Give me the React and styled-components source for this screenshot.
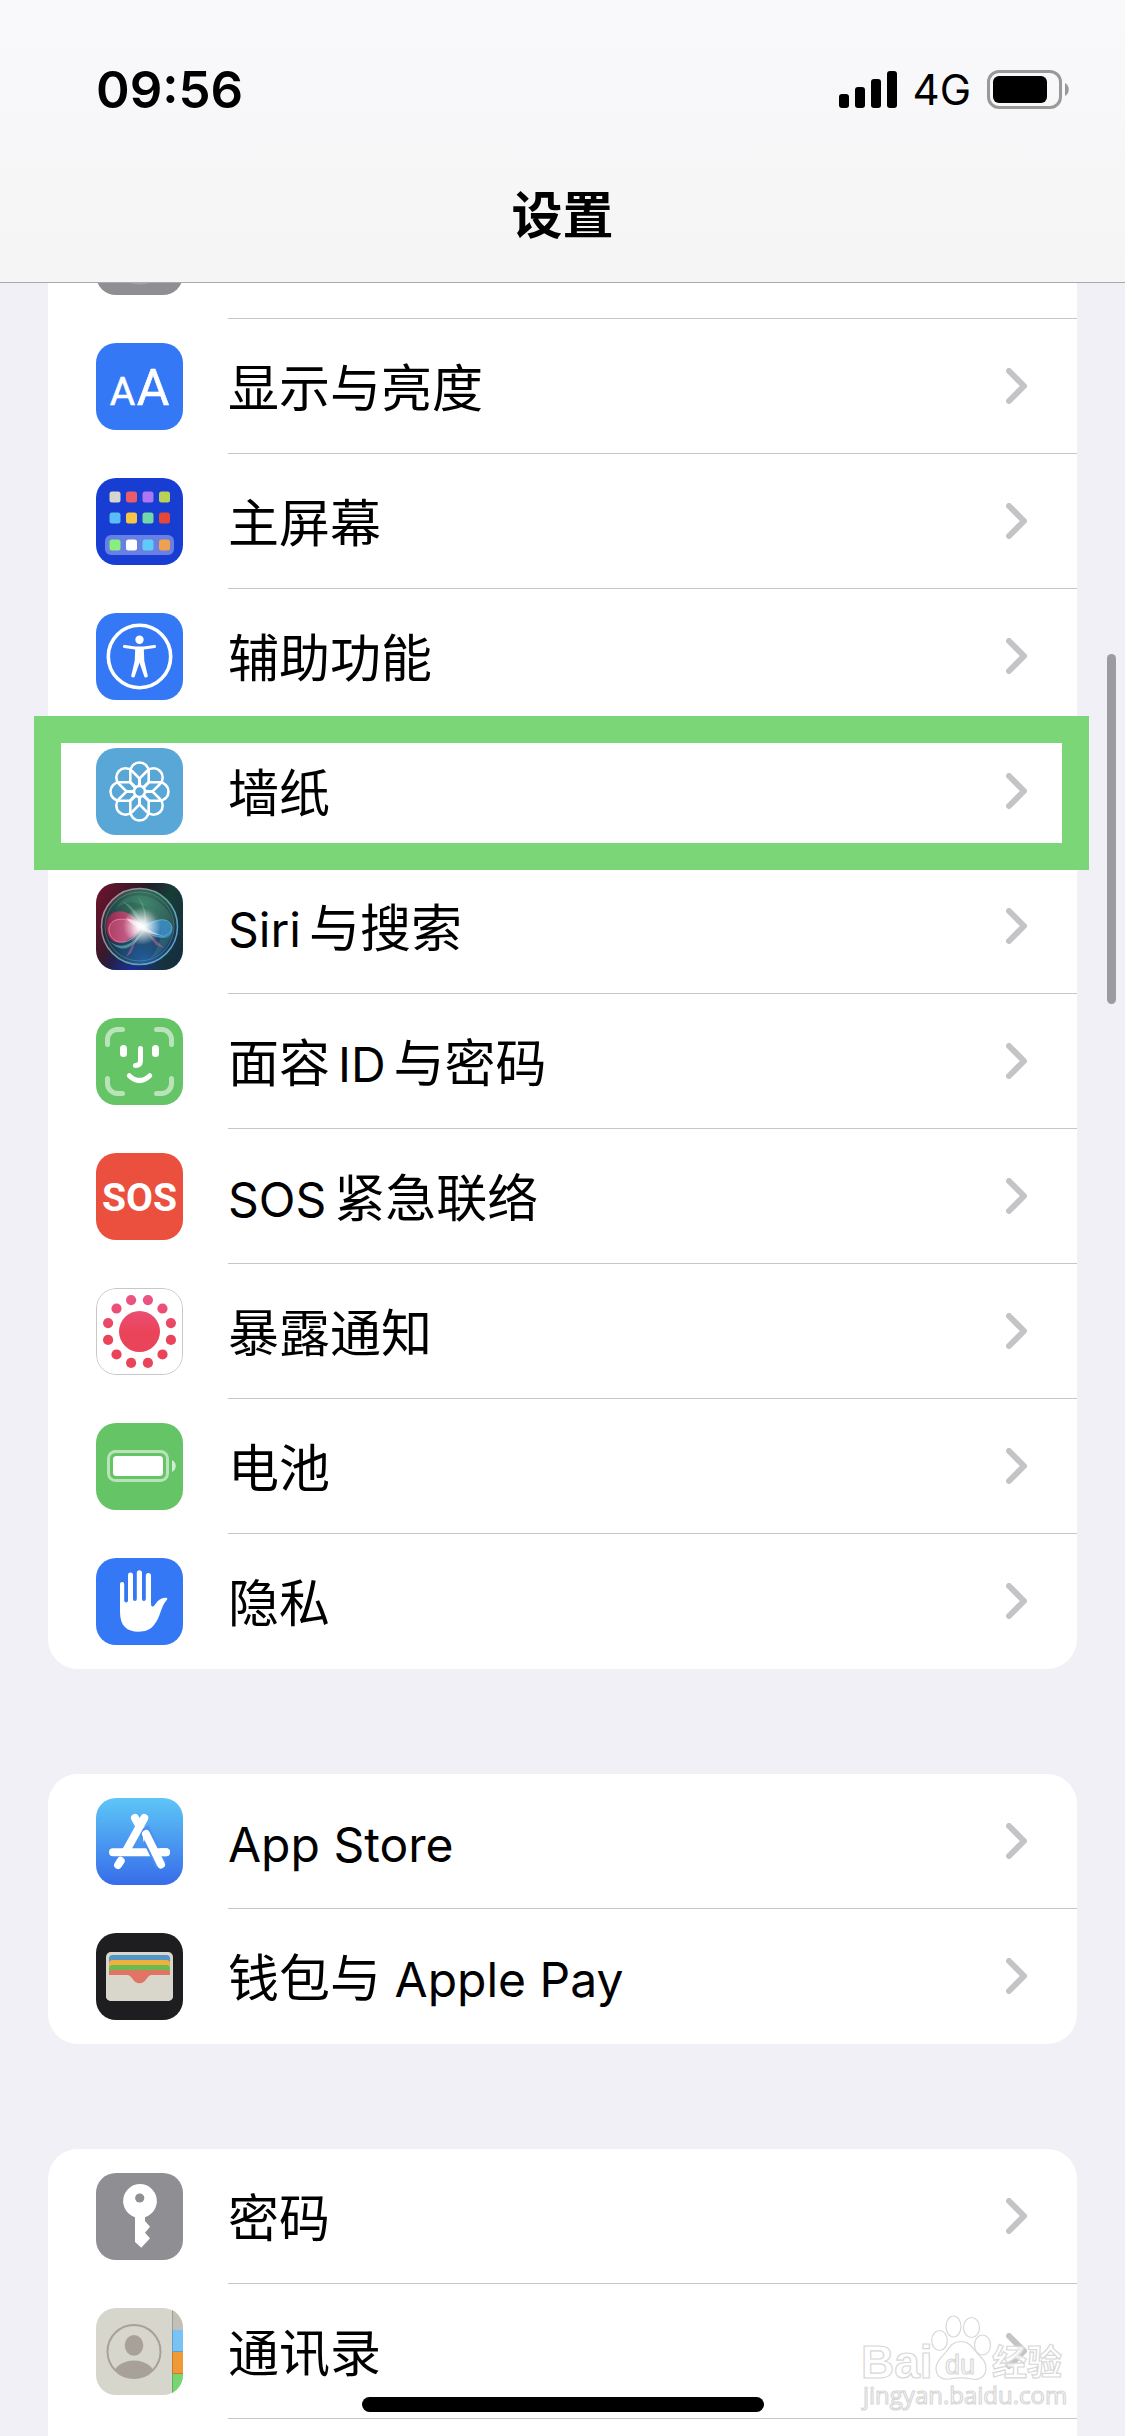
import { styled, createGlobalStyle } from 'styled-components'

const GlobalStyle = createGlobalStyle`
  * {
    box-sizing: border-box;
  }
  body {
    margin: 0;
    background-color: #f1f0f6;
    color: #000000;
    font-family: Inter, 'Noto Sans CJK SC', sans-serif;
  }
`

const StyledPage = styled.div`
  position: relative;
  height: 100vh;
  overflow: hidden;
`

const StyledHeader = styled.header`
  position: relative;
  z-index: 5;
  background: linear-gradient(#f9f9fb, #f5f5f6);
  border-bottom: 1px solid #a9a9ac;
`

const StyledStatusBar = styled.div`
  display: flex;
  align-items: center;
  height: 150px;
  padding: 28px 56px 0 96px;
`

const StyledTime = styled.time`
  flex: 1;
  font-size: 51px;
  font-weight: 600;
`

const StyledNetwork = styled.span`
  margin: 0 16px;
  font-size: 42px;
  font-weight: 400;
`

const StyledTitle = styled.h1`
  margin: 0;
  height: 132px;
  line-height: 132px;
  font-size: 51px;
  font-weight: 700;
  text-align: center;
`

// список начинается под шапкой, первый ряд виден частично
const StyledList = styled.main`
  display: flex;
  flex-direction: column;
  gap: 105px;
  margin-top: -99px;
  padding: 0 48px;
`

const StyledGroup = styled.ul`
  margin: 0;
  padding: 0;
  list-style: none;
  border-radius: 30px;
  background-color: #ffffff;
`

const StyledItem = styled.li`
  position: relative;
`

const StyledLink = styled.a`
  display: flex;
  align-items: center;
  height: 135px;
  padding-left: 48px;
  color: inherit;
  text-decoration: none;
`

const StyledIcon = styled.svg`
  flex: none;
  width: 87px;
  height: 87px;
  border-radius: 20px;
  background: ${(props) => props.$color};
`

const StyledBody = styled.div`
  flex: 1;
  display: flex;
  align-items: center;
  justify-content: space-between;
  height: 135px;
  margin-left: 45px;
  padding-right: 50px;
  border-bottom: 1px solid #c6c6c8;

  li:last-child & {
    border-bottom-color: transparent;
  }
`

const StyledLabel = styled.span`
  padding-top: 6px;
  font-size: 51px;
  line-height: 60px;
`

const StyledLatin = styled.span`
  margin-left: ${(props) => (props.$before ? '8px' : '0')};
  margin-right: ${(props) => (props.$after ? '8px' : '0')};
  font-size: 48px;
`

const StyledHighlight = styled.div`
  position: absolute;
  z-index: 2;
  top: -8px;
  right: -12px;
  bottom: -11px;
  left: -14px;
  border: 27px solid #7bd677;
  pointer-events: none;
`

const StyledScrollThumb = styled.div`
  position: absolute;
  top: 654px;
  right: 9px;
  width: 9px;
  height: 350px;
  border-radius: 5px;
  background-color: #9c9ba0;
`

const StyledHomeIndicator = styled.div`
  position: absolute;
  z-index: 6;
  bottom: 24px;
  left: 50%;
  width: 402px;
  height: 15px;
  margin-left: -201px;
  border-radius: 8px;
  background-color: #000000;
`

const StyledWatermark = styled.svg`
  position: absolute;
  z-index: 4;
  right: 50px;
  bottom: 16px;
  width: 220px;
  height: 115px;
`

function SignalIcon() {
  return (
    <svg width="58" height="37" viewBox="0 0 58 37">
      <rect x="0" y="23" width="10" height="14" rx="3" />
      <rect x="16" y="16" width="10" height="21" rx="3" />
      <rect x="32" y="8" width="10" height="29" rx="3" />
      <rect x="48" y="0" width="10" height="37" rx="3" />
    </svg>
  )
}

function BatteryIcon() {
  return (
    <svg width="82" height="39" viewBox="0 0 82 39">
      <rect x="1.5" y="1.5" width="72" height="36" rx="10.5" fill="none" stroke="#999" strokeWidth="3" />
      <rect x="6" y="6" width="54" height="27" rx="6" />
      <path d="M78 13c5 2.500 5 10.500 0 13z" fill="#999" />
    </svg>
  )
}

function Chevron() {
  return (
    <svg width="21" height="36" viewBox="0 0 21 36">
      <path
        d="M3 3l15 15L3 33"
        fill="none"
        stroke="#c4c4c7"
        strokeWidth="6"
        strokeLinecap="round"
        strokeLinejoin="round"
      />
    </svg>
  )
}

const homeApps = [
  ['#d6d6cd', '#e95c68', '#ae76f4', '#b9d157'],
  ['#5abdf7', '#f6c544', '#72d8a8', '#e54837'],
  ['#86ef80', '#ffffff', '#5ecbf8', '#f19f51'],
]
const homeRows = [13.5, 34.5, 61.5]

const petals = [0, 45, 90, 135, 180, 225, 270, 315]
const dots = [15, 45, 75, 105, 135, 165, 195, 225, 255, 285, 315, 345]

const icons = {
  general: { color: '#8e8e93', art: <circle cx="43.5" cy="49" r="26" fill="none" stroke="#a5a5a9" strokeWidth="3" /> },
  display: {
    color: '#3478f6',
    art: (
      <g fill="#fff" stroke="#fff" strokeWidth="0.600" strokeLinejoin="round" fontFamily="Roboto, sans-serif" textAnchor="middle">
        <text x="26.500" y="61.500" fontSize="39">
          A
        </text>
        <text x="57" y="61.500" fontSize="50">
          A
        </text>
      </g>
    ),
  },
  home: {
    color: '#173dd3',
    art: (
      <>
        <rect x="9" y="57" width="69" height="20" rx="6" fill="#fff" fillOpacity="0.35" />
        {homeApps.map((row, y) =>
          row.map((fill, x) => (
            <rect key={fill} x={13.5 + x * 16.5} y={homeRows[y]} width="11" height="11" rx="2.500" fill={fill} />
          )),
        )}
      </>
    ),
  },
  accessibility: {
    color: '#3478f6',
    art: (
      <g fill="#fff" stroke="#fff" strokeLinecap="round" strokeLinejoin="round">
        <circle cx="43.5" cy="43.5" r="31.200" fill="none" strokeWidth="3.600" />
        <circle cx="43.5" cy="26.700" r="4.200" stroke="none" />
        <path d="M28.500 33.500l10.500 1.500h9l10.500-1.500" fill="none" strokeWidth="3.200" />
        <path d="M40.500 35.500h6l.5 12.500 3.500 15-1 .2-5-14.700h-2l-5 14.700-1-.2 3.500-15z" strokeWidth="2.600" />
      </g>
    ),
  },
  wallpaper: {
    color: '#59a7d7',
    art: (
      <g transform="translate(43.500 43.500)" fill="none" stroke="#fff" strokeWidth="2.600">
        {petals.map((deg) => (
          <path
            key={deg}
            transform={`rotate(${deg})`}
            d="M-3.200 -3.800L-9.200 -9.200V-19.800a9.200 9.200 0 0 1 18.400 0V-9.200L3.200 -3.800"
          />
        ))}
        <circle r="5.500" fill="#59a7d7" />
      </g>
    ),
  },
  siri: {
    color: 'linear-gradient(115deg, #65142c 8%, #251c2c 42%, #173c36 62%, #142b42)',
    art: (
      <>
        <defs>
          <radialGradient id="siriGlow" cx="0.5" cy="0.5" r="0.5">
            <stop offset="0" stopColor="#fff" />
            <stop offset="0.25" stopColor="#fff" stopOpacity="0.85" />
            <stop offset="1" stopColor="#fff" stopOpacity="0" />
          </radialGradient>
          <radialGradient id="siriGreen" cx="0.55" cy="0.2" r="0.65">
            <stop offset="0" stopColor="#387c61" />
            <stop offset="1" stopColor="#387c61" stopOpacity="0" />
          </radialGradient>
          <radialGradient id="siriBlue" cx="0.55" cy="0.95" r="0.6">
            <stop offset="0" stopColor="#235e9d" />
            <stop offset="1" stopColor="#235e9d" stopOpacity="0" />
          </radialGradient>
          <radialGradient id="siriCorner" cx="0.5" cy="0.5" r="0.5">
            <stop offset="0" stopColor="#1d2a94" />
            <stop offset="1" stopColor="#1d2a94" stopOpacity="0" />
          </radialGradient>
          <linearGradient id="siriRing" x1="0" y1="0.2" x2="1" y2="0.8">
            <stop offset="0" stopColor="#cf7c90" />
            <stop offset="0.5" stopColor="#64a392" />
            <stop offset="1" stopColor="#5ba4df" />
          </linearGradient>
          <linearGradient id="siriPink">
            <stop offset="0" stopColor="#a8204a" />
            <stop offset="0.7" stopColor="#d0507f" />
            <stop offset="1" stopColor="#fbc8da" />
          </linearGradient>
        </defs>
        <circle cx="36" cy="87" r="32" fill="url(#siriCorner)" />
        <circle cx="43.5" cy="43.5" r="38" fill="#182c3c" />
        <circle cx="43.5" cy="43.5" r="38" fill="url(#siriGreen)" />
        <circle cx="43.5" cy="43.5" r="38" fill="url(#siriBlue)" />
        <path d="M20 26C30 6 58 9 72 28S70 68 54 76C68 58 70 38 54 27S30 18 20 26z" fill="#5bae91" fillOpacity="0.22" />
        <path d="M46 44C38 31 28 26 19 29S8 45 13 54s18 8 33-10z" fill="url(#siriPink)" fillOpacity="0.85" />
        <path d="M46 44C32 34 18 34 14 42s4 19 14 17 13-9 18-15z" fill="#f28bb4" fillOpacity="0.25" stroke="#f38ab0" strokeWidth="0.800" />
        <path d="M13 57c8 9 22 9 36-12-9 20-24 28-36 12z" fill="#71bab6" fillOpacity="0.6" />
        <path d="M44 43c12 6 15 12 24 12s11-11 5-16-13-3-29 4z" fill="#3e93d4" fillOpacity="0.75" />
        <path d="M46 45c10-6 22-12 28-5s-4 15-11 14-12-5-17-9z" fill="none" stroke="#6ed0dd" strokeOpacity="0.6" strokeWidth="0.900" />
        <path d="M44 43C37 28 30 20 25 18c10 3 18 12 22 24zM48 42c2-12-2-22-7-29 7 7 10 18 9 29z" fill="#b8d7c5" fillOpacity="0.3" />
        <path d="M46 44l22 21-8-3zM46 44L30 74l5-4z" fill="#da719c" fillOpacity="0.45" />
        <circle cx="46" cy="43" r="19" fill="url(#siriGlow)" />
        <path d="M30 35q14 3 18 8 8 7 20 10-15-2-24-7-9-5-14-11z" fill="#fff" fillOpacity="0.55" />
        <circle cx="43.5" cy="43.5" r="38" fill="none" stroke="url(#siriRing)" strokeWidth="1.500" />
        <circle cx="43.5" cy="43.5" r="34.500" fill="none" stroke="url(#siriRing)" strokeOpacity="0.45" strokeWidth="1" />
      </>
    ),
  },
  faceid: {
    color: '#65c466',
    art: (
      <g fill="none" stroke="#fff" strokeWidth="5" strokeLinecap="round">
        <path
          d="M11.500 26.500v-5a10 10 0 0 1 10-10h5M60.500 11.500h5a10 10 0 0 1 10 10v5M75.500 60.500v5a10 10 0 0 1-10 10h-5M26.500 75.500h-5a10 10 0 0 1-10-10v-5"
          strokeOpacity="0.55"
        />
        <path d="M27.500 30.500v5M59.500 30.500v5" strokeWidth="7" />
        <path d="M44.500 30.500v12c0 3.500-1.500 5-5 5M33.300 57.700q10.200 9.600 20.400 0" />
      </g>
    ),
  },
  sos: {
    color: '#eb4f3d',
    art: (
      <text
        x="43.5"
        y="58"
        fill="#fff"
        fontSize="39"
        fontWeight="700"
        fontFamily="Roboto, sans-serif"
        textAnchor="middle"
      >
        SOS
      </text>
    ),
  },
  exposure: {
    color: '#ffffff',
    art: (
      <>
        <defs>
          <linearGradient id="exposure" gradientUnits="userSpaceOnUse" x1="0" y1="8" x2="0" y2="44">
            <stop offset="0" stopColor="#eb5585" />
            <stop offset="1" stopColor="#ea445a" />
          </linearGradient>
        </defs>
        <rect x="0.5" y="0.5" width="86" height="86" rx="19.500" fill="none" stroke="#c8c8ca" />
        <g fill="url(#exposure)">
          <circle cx="43.5" cy="43.5" r="20.500" />
          {dots.map((deg) => (
            <circle
              key={deg}
              cx={43.5 + 32.5 * Math.sin((deg * Math.PI) / 180)}
              cy={43.5 - 32.5 * Math.cos((deg * Math.PI) / 180)}
              r="5.100"
            />
          ))}
        </g>
      </>
    ),
  },
  battery: {
    color: '#65c466',
    art: (
      <g fill="#fff">
        <rect x="12.500" y="28.500" width="59" height="29" rx="7" fill="none" stroke="#fff" strokeWidth="3" opacity="0.55" />
        <rect x="17" y="33" width="50" height="20" rx="3.500" />
        <path d="M76 37c5 2.500 5 9.500 0 12z" opacity="0.7" />
      </g>
    ),
  },
  privacy: {
    color: '#3478f6',
    art: (
      <path
        d="M24 26a2.100 2.100 0 0 1 4.200 0V42.500a1.900 1.900 0 0 0 3.800 0V17a2.500 2.500 0 0 1 5 0V41a1.900 1.900 0 0 0 3.800 0V14.800a2.600 2.600 0 0 1 5.200 0V41a1.900 1.900 0 0 0 3.800 0V17.500a2.600 2.600 0 0 1 5.200 0V46c.3 3.200 2.200 3.400 4 .5 3.500-5 7-7.300 11-6.800 1.600.3 1.600 1.200.7 2.300-6.700 8-5.700 16.500-12.700 25-4 5-9 6.700-15.500 6.700C31 73.700 24 68 24 54z"
        fill="#fff"
      />
    ),
  },
  appstore: {
    color: 'linear-gradient(#5dc6f7, #376ce9)',
    art: (
      <g fill="none" stroke="#fff" strokeWidth="8" strokeLinecap="round">
        <path d="M17 54.200h53M39 20l6 11" />
        <path d="M47 30L65 66.500" stroke="#4991ef" strokeWidth="12" strokeLinecap="butt" />
        <path d="M65 66.500L50 36M61 54.200h9M24.700 62.800l-2.600 4.200" />
        <path d="M48.300 20L30 53" />
        <path d="M50.400 31.500c-3.600 3-4.600 7.500-2.400 13z" fill="#fff" stroke="none" />
      </g>
    ),
  },
  wallet: {
    color: '#1e1e20',
    art: (
      <>
        <rect x="10" y="19" width="67" height="49" rx="5" fill="#d9d6cc" />
        <rect x="13" y="22" width="61" height="14" rx="3.500" fill="#5196c4" />
        <rect x="13" y="27" width="61" height="14" rx="3.500" fill="#f1b03e" />
        <rect x="13" y="32" width="61" height="12" rx="3.500" fill="#6cbb4f" />
        <rect x="13" y="37" width="61" height="14" rx="3.500" fill="#e17464" />
        <path
          d="M10 42h20.500c3.500 0 4.500 2 6.500 4.500s3.500 3.700 6.500 3.700 4.500-1.200 6.500-3.700 3-4.500 6.500-4.500H77v21a5 5 0 0 1-5 5H15a5 5 0 0 1-5-5z"
          fill="#d9d6cc"
        />
      </>
    ),
  },
  passwords: {
    color: '#8e8e93',
    art: (
      <>
        <path
          d="M44 11a17 17 0 0 1 5 33.200V48l5 5.700-5 6 5 5.600-8.700 9.400L39 69V44.200A17 17 0 0 1 44 11z"
          fill="#fff"
        />
        <circle cx="43.700" cy="25" r="4.600" fill="#8e8e93" />
      </>
    ),
  },
  contacts: {
    color: '#d6d6cc',
    art: (
      <>
        <defs>
          <clipPath id="avatar">
            <circle cx="38" cy="43.5" r="26.500" />
          </clipPath>
        </defs>
        <path d="M76 0h11v22H76z" fill="#c3c0b8" />
        <path d="M76 22h11v22H76z" fill="#78c3f3" />
        <path d="M76 44h11v22H76z" fill="#f09a37" />
        <path d="M76 66h11v21H76z" fill="#78d572" />
        <path d="M76 0h1v87h-1zM76 43h11v1H76zM76 65h11v1H76z" fillOpacity="0.18" />
        <circle cx="38" cy="43.5" r="26.500" fill="none" stroke="#a8a199" strokeWidth="2" />
        <ellipse cx="38" cy="37.300" rx="9.300" ry="10.400" fill="#a8a199" />
        <ellipse cx="38" cy="68" rx="21" ry="15.500" fill="#a8a199" clipPath="url(#avatar)" />
      </>
    ),
  },
}

const groups = [
  [
    { icon: 'general', name: '' },
    { icon: 'display', name: '显示与亮度' },
    { icon: 'home', name: '主屏幕' },
    { icon: 'accessibility', name: '辅助功能' },
    { icon: 'wallpaper', name: '墙纸', highlighted: true },
    { icon: 'siri', name: 'Siri与搜索' },
    { icon: 'faceid', name: '面容ID与密码' },
    { icon: 'sos', name: 'SOS紧急联络' },
    { icon: 'exposure', name: '暴露通知' },
    { icon: 'battery', name: '电池' },
    { icon: 'privacy', name: '隐私' },
  ],
  [
    { icon: 'appstore', name: 'App Store' },
    { icon: 'wallet', name: '钱包与 Apple Pay' },
  ],
  [
    { icon: 'passwords', name: '密码' },
    { icon: 'contacts', name: '通讯录' },
    { name: '' },
  ],
]

// латиница чуть мельче иероглифов и отделена от них отступом
function Label({ text }) {
  const parts = text.split(/([A-Za-z ]+)/).filter(Boolean)
  return (
    <StyledLabel>
      {parts.map((part, index) =>
        /[A-Za-z]/.test(part) ? (
          <StyledLatin
            key={part}
            $before={index > 0 && !part.startsWith(' ')}
            $after={index < parts.length - 1}
          >
            {part}
          </StyledLatin>
        ) : (
          part
        ),
      )}
    </StyledLabel>
  )
}

function Row({ icon, name, highlighted }) {
  return (
    <StyledItem>
      <StyledLink href="#">
        {icon && (
          <StyledIcon viewBox="0 0 87 87" $color={icons[icon].color} aria-hidden="true">
            {icons[icon].art}
          </StyledIcon>
        )}
        <StyledBody>
          <Label text={name} />
          <Chevron />
        </StyledBody>
      </StyledLink>
      {highlighted && <StyledHighlight />}
    </StyledItem>
  )
}

function Watermark() {
  return (
    <StyledWatermark viewBox="0 0 220 115">
      <g fill="#fff" fillOpacity="0.75" stroke="#d8d8d8" strokeWidth="1.200" fontWeight="700">
        <text x="6" y="73" fontSize="46" fontFamily="'Liberation Sans', sans-serif">
          Bai
        </text>
        <ellipse cx="84.500" cy="35.500" rx="7.800" ry="10" />
        <ellipse cx="98.500" cy="21.500" rx="7.500" ry="10.500" />
        <ellipse cx="116.500" cy="22.500" rx="8" ry="10" />
        <ellipse cx="127.500" cy="40" rx="8" ry="10" />
        <path d="M105.500 36.500c8 0 11.500 5 15.500 10.500 4 5 10 8 10 16 0 9-7 12.500-14 11-8-1.500-15-1.500-23 0-7 1.300-13-3-13-11 0-7 6-11 10-16 4-5.500 7-10.500 14.500-10.500z" />
        <text x="90" y="69" fontSize="27" fontFamily="'Liberation Sans', sans-serif" fontWeight="400">
          du
        </text>
        <text x="137" y="70" fontSize="35" fontFamily="'Noto Sans CJK SC', sans-serif">
          经验
        </text>
        <text x="8" y="99" fontSize="24" fontFamily="'Open Sans', sans-serif" fontWeight="400">
          jingyan.baidu.com
        </text>
      </g>
    </StyledWatermark>
  )
}

export default function App() {
  return (
    <StyledPage>
      <GlobalStyle />
      <StyledHeader>
        <StyledStatusBar>
          <StyledTime>09:56</StyledTime>
          <SignalIcon />
          <StyledNetwork>4G</StyledNetwork>
          <BatteryIcon />
        </StyledStatusBar>
        <StyledTitle>设置</StyledTitle>
      </StyledHeader>
      <StyledList>
        {groups.map((rows, index) => (
          <StyledGroup key={index}>
            {rows.map((row) => (
              <Row key={row.name} {...row} />
            ))}
          </StyledGroup>
        ))}
      </StyledList>
      <StyledScrollThumb />
      <Watermark />
      <StyledHomeIndicator />
    </StyledPage>
  )
}
